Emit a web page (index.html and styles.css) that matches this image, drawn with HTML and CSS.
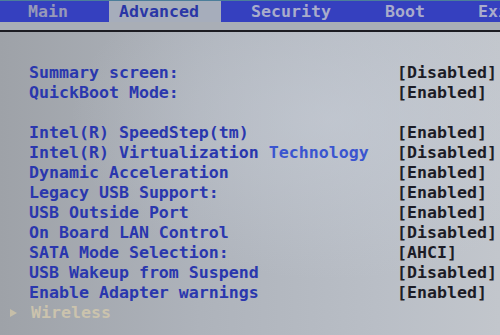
FILE: index.html
```html
<!DOCTYPE html>
<html>
<head>
<meta charset="utf-8">
<link rel="stylesheet" href="styles.css">
</head>
<body>
<div class="screen">
  <div class="tabs">
    <div class="tab tab-main">Main</div>
    <div class="tab tab-adv active">Advanced</div>
    <div class="tab tab-sec">Security</div>
    <div class="tab tab-boot">Boot</div>
    <div class="tab tab-exit">Exit</div>
  </div>
  <div class="strip"></div>
  <div class="rule"></div>
  <div class="content">
    <div class="row"><span class="label">Summary screen:</span><span class="value">[Disabled]</span></div>
    <div class="row"><span class="label">QuickBoot Mode:</span><span class="value">[Enabled]</span></div>
    <div class="row blank"></div>
    <div class="row"><span class="label">Intel(R) SpeedStep(tm)</span><span class="value">[Enabled]</span></div>
    <div class="row"><span class="label">Intel(R) Virtualization <span class="hl">Technology</span></span><span class="value">[Disabled]</span></div>
    <div class="row"><span class="label">Dynamic Acceleration</span><span class="value">[Enabled]</span></div>
    <div class="row"><span class="label">Legacy USB Support:</span><span class="value">[Enabled]</span></div>
    <div class="row"><span class="label">USB Outside Port</span><span class="value">[Enabled]</span></div>
    <div class="row"><span class="label">On Board LAN Control</span><span class="value">[Disabled]</span></div>
    <div class="row"><span class="label">SATA Mode Selection:</span><span class="value">[AHCI]</span></div>
    <div class="row"><span class="label">USB Wakeup from Suspend</span><span class="value">[Disabled]</span></div>
    <div class="row"><span class="label">Enable Adapter warnings</span><span class="value">[Enabled]</span></div>
    <div class="row sub"><span class="arrow-cell"><span class="arrow"></span></span><span class="label dim">Wireless</span></div>
  </div>
</div>
</body>
</html>
```

FILE: styles.css
```css
html, body {
  margin: 0;
  padding: 0;
  width: 500px;
  height: 335px;
  overflow: hidden;
}
.screen {
  width: 500px;
  height: 335px;
  overflow: hidden;
  font-family: "DejaVu Sans Mono", "Liberation Mono", monospace;
  font-size: 16.6px;
  font-weight: bold;
  background:
    radial-gradient(ellipse 260px 160px at 330px 120px, rgba(200,206,216,0.55), rgba(200,206,216,0) 100%),
    linear-gradient(90deg, #9ea2a8 0%, #aeb3bb 40%, #b9bec6 75%, #c2c6cc 100%);
  display: flex;
  flex-direction: column;
}
.tabs {
  display: flex;
  height: 22px;
  background: #3540bf;
  border-top: 1px solid #4c7e9a;
  box-sizing: border-box;
  line-height: 21px;
  color: #a9accb;
}
.tab {
  box-sizing: border-box;
  white-space: nowrap;
}
.tab-main { width: 109px; padding-left: 28px; color: #9799b8; }
.tab-adv { width: 112px; padding-left: 10px; }
.tab-sec { width: 150px; padding-left: 30px; }
.tab-boot { width: 93px; padding-left: 14px; }
.tab-exit { width: 36px; padding-left: 14px; }
.tab.active {
  background: #a6adbb;
  color: #2a36a6;
}
.strip {
  height: 8px;
  background: #a9aeb6;
}
.rule {
  height: 2px;
  background: #1c1c22;
}
.content {
  padding-top: 31px;
  display: flex;
  flex-direction: column;
}
.row {
  display: flex;
  height: 20px;
  line-height: 20px;
  white-space: nowrap;
}
.label {
  width: 368px;
  padding-left: 29px;
  color: #2a37ae;
}
.hl {
  color: #3a55d0;
}
.value {
  color: #1c1c26;
}
.arrow-cell {
  width: 31px;
  padding-left: 10px;
  box-sizing: border-box;
  display: flex;
  align-items: center;
}
.arrow {
  width: 0;
  height: 0;
  border-left: 7px solid #c6bea8;
  border-top: 4.5px solid transparent;
  border-bottom: 4.5px solid transparent;
}
.sub .label {
  padding-left: 0;
}
.dim {
  color: #cbc3ad;
}
```
